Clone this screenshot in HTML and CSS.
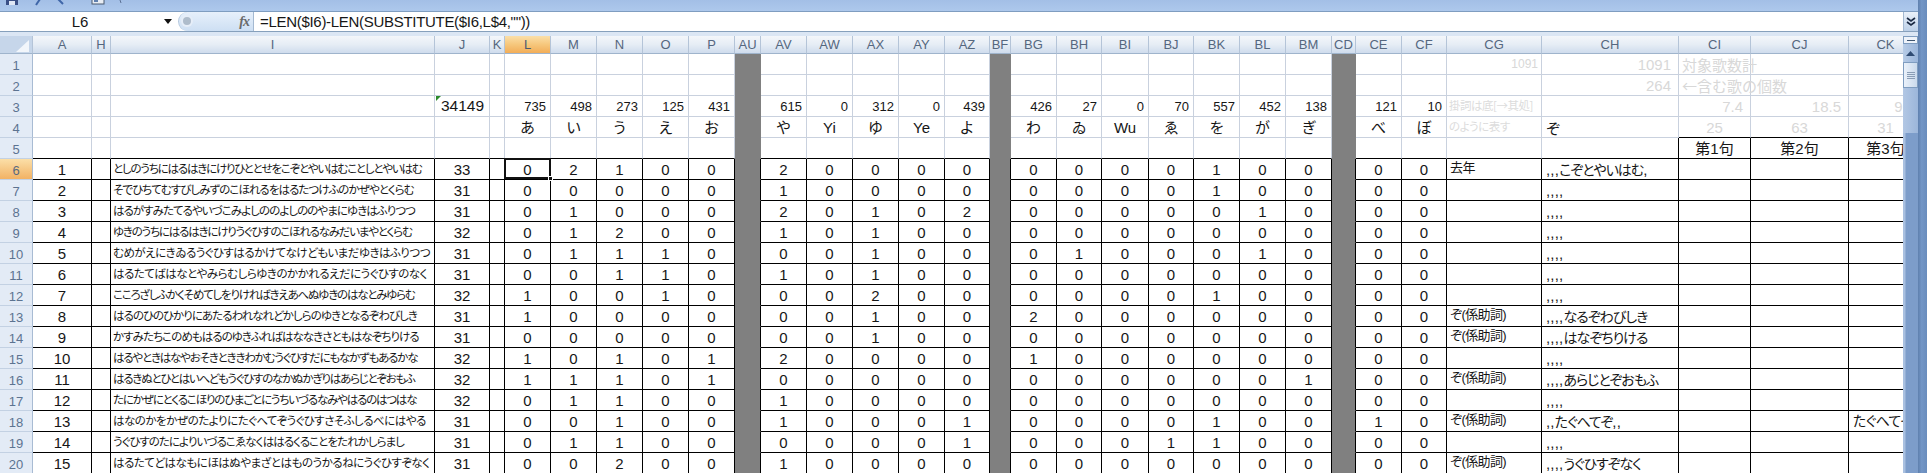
FILE: index.html
```html
<!DOCTYPE html>
<html lang="ja">
<head>
<meta charset="utf-8">
<title>Sheet</title>
<link rel="stylesheet" href="styles.css">
</head>
<body>
<div class="app">
<div class="main">
<header class="qat">
<svg class="qat-icons" width="130" height="11" viewBox="0 0 130 11">
<rect x="6" y="-4" width="12" height="9" fill="#3a4f86"/><rect x="9" y="1" width="6" height="4" fill="#dfe7f5"/>
<path d="M36 5 L40 -1" stroke="#3f66a8" stroke-width="2" fill="none"/>
<path d="M63 4 L58 -1" stroke="#3f66a8" stroke-width="2" fill="none"/>
<rect x="92" y="-3" width="12" height="7" fill="#e8edf4" stroke="#4a5a70"/><rect x="94" y="0" width="4" height="2" fill="#5f7fae"/>
<path d="M120 0 L121 3" stroke="#5a7094" stroke-width="1"/>
</svg>
</header>
<div class="formula">
<div class="namebox">L6</div>
<div class="name-arrow"><svg width="8" height="5" viewBox="0 0 8 5"><path d="M0 0H8L4 5Z" fill="#111"/></svg></div>
<div class="fx-pill"><span class="fx-dot"></span><span class="fx">fx</span></div>
<div class="input">=LEN($I6)-LEN(SUBSTITUTE($I6,L$4,""))</div>
<div class="expand"><svg width="10" height="10" viewBox="0 0 10 10"><path d="M1 1L5 4L9 1M1 5L5 8L9 5" fill="none" stroke="#1b2a44" stroke-width="1.6"/></svg></div>
</div>
<div class="gap"></div>
<div class="workarea">
<div class="sheet">
<table class="grid">
<colgroup>
<col class="w33"><col class="w59"><col class="w19"><col class="w324"><col class="w55"><col class="w15">
<col class="w46"><col class="w46"><col class="w46"><col class="w46"><col class="w46"><col class="w26">
<col class="w46"><col class="w46"><col class="w46"><col class="w46"><col class="w45"><col class="w21">
<col class="w46"><col class="w45"><col class="w47"><col class="w45"><col class="w46"><col class="w46"><col class="w46"><col class="w24">
<col class="w46"><col class="w45"><col class="w95"><col class="w137"><col class="w72"><col class="w98"><col class="w74">
</colgroup>
<thead>
<tr><th class="corner"><svg width="14" height="12" viewBox="0 0 14 12"><path d="M14 0V12H1Z" fill="#f2f6fb"/></svg></th><th>A</th><th>H</th><th>I</th><th>J</th><th>K</th><th class="on">L</th><th>M</th><th>N</th><th>O</th><th>P</th><th>AU</th><th>AV</th><th>AW</th><th>AX</th><th>AY</th><th>AZ</th><th>BF</th><th>BG</th><th>BH</th><th>BI</th><th>BJ</th><th>BK</th><th>BL</th><th>BM</th><th>CD</th><th>CE</th><th>CF</th><th>CG</th><th>CH</th><th>CI</th><th>CJ</th><th>CK</th></tr>
</thead>
<tbody>
<tr><th>1</th><td></td><td></td><td></td><td></td><td></td><td></td><td></td><td></td><td></td><td></td><td class="g"></td><td></td><td></td><td></td><td></td><td></td><td class="g"></td><td></td><td></td><td></td><td></td><td></td><td></td><td></td><td class="g"></td><td></td><td></td><td class="note-n">1091</td><td class="faint-r">1091</td><td class="faint-l">対象歌数計</td><td></td><td></td></tr>
<tr><th>2</th><td></td><td></td><td></td><td></td><td></td><td></td><td></td><td></td><td></td><td></td><td class="g"></td><td></td><td></td><td></td><td></td><td></td><td class="g"></td><td></td><td></td><td></td><td></td><td></td><td></td><td></td><td class="g"></td><td></td><td></td><td></td><td class="faint-r">264</td><td class="faint-l">←含む歌の個数</td><td></td><td></td></tr>
<tr class="totals"><th>3</th><td></td><td></td><td></td><td class="flag">34149</td><td></td><td>735</td><td>498</td><td>273</td><td>125</td><td>431</td><td class="g"></td><td>615</td><td>0</td><td>312</td><td>0</td><td>439</td><td class="g"></td><td>426</td><td>27</td><td>0</td><td>70</td><td>557</td><td>452</td><td>138</td><td class="g"></td><td>121</td><td>10</td><td class="note">掛詞は底[→其処]</td><td></td><td class="faint-r">7.4</td><td class="faint-r">18.5</td><td class="faint-r">9.2</td></tr>
<tr class="kana"><th>4</th><td></td><td></td><td></td><td></td><td></td><td>あ</td><td>い</td><td>う</td><td>え</td><td>お</td><td class="g"></td><td>や</td><td>Yi</td><td>ゆ</td><td>Ye</td><td>よ</td><td class="g"></td><td>わ</td><td>ゐ</td><td>Wu</td><td>ゑ</td><td>を</td><td>が</td><td>ぎ</td><td class="g"></td><td>べ</td><td>ぼ</td><td class="note">のように表す</td><td class="verse">ぞ</td><td class="faint-c line-b">25</td><td class="faint-c line-b">63</td><td class="faint-c line-b">31</td></tr>
<tr class="r5"><th>5</th><td></td><td></td><td></td><td></td><td></td><td></td><td></td><td></td><td></td><td></td><td class="g"></td><td></td><td></td><td></td><td></td><td></td><td class="g"></td><td></td><td></td><td></td><td></td><td></td><td></td><td></td><td class="g"></td><td></td><td></td><td></td><td class="line-r"></td><td class="ku">第1句</td><td class="ku">第2句</td><td class="ku">第3句</td></tr>
<tr class="b"><th class="on">6</th><td>1</td><td></td><td class="poem">としのうちにはるはきにけりひととせをこぞとやいはむことしとやいはむ</td><td>33</td><td></td><td class="cursor">0</td><td>2</td><td>1</td><td>0</td><td>0</td><td class="g"></td><td>2</td><td>0</td><td>0</td><td>0</td><td>0</td><td class="g"></td><td>0</td><td>0</td><td>0</td><td>0</td><td>1</td><td>0</td><td>0</td><td class="g"></td><td>0</td><td>0</td><td class="tag">去年</td><td class="verse"><span class="cm">,,,</span>こぞとやいはむ<span class="cm">,</span></td><td></td><td></td><td></td></tr>
<tr class="b"><th>7</th><td>2</td><td></td><td class="poem mid">そでひちてむすびしみずのこほれるをはるたつけふのかぜやとくらむ</td><td>31</td><td></td><td>0</td><td>0</td><td>0</td><td>0</td><td>0</td><td class="g"></td><td>1</td><td>0</td><td>0</td><td>0</td><td>0</td><td class="g"></td><td>0</td><td>0</td><td>0</td><td>0</td><td>1</td><td>0</td><td>0</td><td class="g"></td><td>0</td><td>0</td><td class="tag"></td><td class="verse"><span class="cm">,,,,</span></td><td></td><td></td><td></td></tr>
<tr class="b"><th>8</th><td>3</td><td></td><td class="poem mid">はるがすみたてるやいづこみよしののよしののやまにゆきはふりつつ</td><td>31</td><td></td><td>0</td><td>1</td><td>0</td><td>0</td><td>0</td><td class="g"></td><td>2</td><td>0</td><td>1</td><td>0</td><td>2</td><td class="g"></td><td>0</td><td>0</td><td>0</td><td>0</td><td>0</td><td>1</td><td>0</td><td class="g"></td><td>0</td><td>0</td><td class="tag"></td><td class="verse"><span class="cm">,,,,</span></td><td></td><td></td><td></td></tr>
<tr class="b"><th>9</th><td>4</td><td></td><td class="poem">ゆきのうちにはるはきにけりうぐひすのこほれるなみだいまやとくらむ</td><td>32</td><td></td><td>0</td><td>1</td><td>2</td><td>0</td><td>0</td><td class="g"></td><td>1</td><td>0</td><td>1</td><td>0</td><td>0</td><td class="g"></td><td>0</td><td>0</td><td>0</td><td>0</td><td>0</td><td>0</td><td>0</td><td class="g"></td><td>0</td><td>0</td><td class="tag"></td><td class="verse"><span class="cm">,,,,</span></td><td></td><td></td><td></td></tr>
<tr class="b"><th>10</th><td>5</td><td></td><td class="poem wide">むめがえにきゐるうぐひすはるかけてなけどもいまだゆきはふりつつ</td><td>31</td><td></td><td>0</td><td>1</td><td>1</td><td>1</td><td>0</td><td class="g"></td><td>0</td><td>0</td><td>1</td><td>0</td><td>0</td><td class="g"></td><td>0</td><td>1</td><td>0</td><td>0</td><td>0</td><td>1</td><td>0</td><td class="g"></td><td>0</td><td>0</td><td class="tag"></td><td class="verse"><span class="cm">,,,,</span></td><td></td><td></td><td></td></tr>
<tr class="b"><th>11</th><td>6</td><td></td><td class="poem wide">はるたてばはなとやみらむしらゆきのかかれるえだにうぐひすのなく</td><td>31</td><td></td><td>0</td><td>0</td><td>1</td><td>1</td><td>0</td><td class="g"></td><td>1</td><td>0</td><td>1</td><td>0</td><td>0</td><td class="g"></td><td>0</td><td>0</td><td>0</td><td>0</td><td>0</td><td>0</td><td>0</td><td class="g"></td><td>0</td><td>0</td><td class="tag"></td><td class="verse"><span class="cm">,,,,</span></td><td></td><td></td><td></td></tr>
<tr class="b"><th>12</th><td>7</td><td></td><td class="poem">こころざしふかくそめてしをりければきえあへぬゆきのはなとみゆらむ</td><td>32</td><td></td><td>1</td><td>0</td><td>0</td><td>1</td><td>0</td><td class="g"></td><td>0</td><td>0</td><td>2</td><td>0</td><td>0</td><td class="g"></td><td>0</td><td>0</td><td>0</td><td>0</td><td>1</td><td>0</td><td>0</td><td class="g"></td><td>0</td><td>0</td><td class="tag"></td><td class="verse"><span class="cm">,,,,</span></td><td></td><td></td><td></td></tr>
<tr class="b"><th>13</th><td>8</td><td></td><td class="poem mid">はるのひのひかりにあたるわれなれどかしらのゆきとなるぞわびしき</td><td>31</td><td></td><td>1</td><td>0</td><td>0</td><td>0</td><td>0</td><td class="g"></td><td>0</td><td>0</td><td>1</td><td>0</td><td>0</td><td class="g"></td><td>2</td><td>0</td><td>0</td><td>0</td><td>0</td><td>0</td><td>0</td><td class="g"></td><td>0</td><td>0</td><td class="tag">ぞ(係助詞)</td><td class="verse"><span class="cm">,,,,</span>なるぞわびしき</td><td></td><td></td><td></td></tr>
<tr class="b"><th>14</th><td>9</td><td></td><td class="poem mid">かすみたちこのめもはるのゆきふればはななきさともはなぞちりける</td><td>31</td><td></td><td>0</td><td>0</td><td>0</td><td>0</td><td>0</td><td class="g"></td><td>0</td><td>0</td><td>1</td><td>0</td><td>0</td><td class="g"></td><td>0</td><td>0</td><td>0</td><td>0</td><td>0</td><td>0</td><td>0</td><td class="g"></td><td>0</td><td>0</td><td class="tag">ぞ(係助詞)</td><td class="verse"><span class="cm">,,,,</span>はなぞちりける</td><td></td><td></td><td></td></tr>
<tr class="b"><th>15</th><td>10</td><td></td><td class="poem">はるやときはなやおそきとききわかむうぐひすだにもなかずもあるかな</td><td>32</td><td></td><td>1</td><td>0</td><td>1</td><td>0</td><td>1</td><td class="g"></td><td>2</td><td>0</td><td>0</td><td>0</td><td>0</td><td class="g"></td><td>1</td><td>0</td><td>0</td><td>0</td><td>0</td><td>0</td><td>0</td><td class="g"></td><td>0</td><td>0</td><td class="tag"></td><td class="verse"><span class="cm">,,,,</span></td><td></td><td></td><td></td></tr>
<tr class="b"><th>16</th><td>11</td><td></td><td class="poem">はるきぬとひとはいへどもうぐひすのなかぬかぎりはあらじとぞおもふ</td><td>32</td><td></td><td>1</td><td>1</td><td>1</td><td>0</td><td>1</td><td class="g"></td><td>0</td><td>0</td><td>0</td><td>0</td><td>0</td><td class="g"></td><td>0</td><td>0</td><td>0</td><td>0</td><td>0</td><td>0</td><td>1</td><td class="g"></td><td>0</td><td>0</td><td class="tag">ぞ(係助詞)</td><td class="verse"><span class="cm">,,,,</span>あらじとぞおもふ</td><td></td><td></td><td></td></tr>
<tr class="b"><th>17</th><td>12</td><td></td><td class="poem">たにかぜにとくるこほりのひまごとにうちいづるなみやはるのはつはな</td><td>32</td><td></td><td>0</td><td>1</td><td>1</td><td>0</td><td>0</td><td class="g"></td><td>1</td><td>0</td><td>0</td><td>0</td><td>0</td><td class="g"></td><td>0</td><td>0</td><td>0</td><td>0</td><td>0</td><td>0</td><td>0</td><td class="g"></td><td>0</td><td>0</td><td class="tag"></td><td class="verse"><span class="cm">,,,,</span></td><td></td><td></td><td></td></tr>
<tr class="b"><th>18</th><td>13</td><td></td><td class="poem wide">はなのかをかぜのたよりにたぐへてぞうぐひすさそふしるべにはやる</td><td>31</td><td></td><td>0</td><td>0</td><td>1</td><td>0</td><td>0</td><td class="g"></td><td>1</td><td>0</td><td>0</td><td>0</td><td>1</td><td class="g"></td><td>0</td><td>0</td><td>0</td><td>0</td><td>1</td><td>0</td><td>0</td><td class="g"></td><td>1</td><td>0</td><td class="tag">ぞ(係助詞)</td><td class="verse"><span class="cm">,,</span>たぐへてぞ<span class="cm">,,</span></td><td></td><td></td><td class="verse-plain">たぐへてぞ</td></tr>
<tr class="b"><th>19</th><td>14</td><td></td><td class="poem mid">うぐひすのたによりいづるこゑなくははるくることをたれかしらまし</td><td>31</td><td></td><td>0</td><td>1</td><td>1</td><td>0</td><td>0</td><td class="g"></td><td>0</td><td>0</td><td>0</td><td>0</td><td>1</td><td class="g"></td><td>0</td><td>0</td><td>0</td><td>1</td><td>1</td><td>0</td><td>0</td><td class="g"></td><td>0</td><td>0</td><td class="tag"></td><td class="verse"><span class="cm">,,,,</span></td><td></td><td></td><td></td></tr>
<tr class="b"><th>20</th><td>15</td><td></td><td class="poem wide">はるたてどはなもにほはぬやまざとはものうかるねにうぐひすぞなく</td><td>31</td><td></td><td>0</td><td>0</td><td>2</td><td>0</td><td>0</td><td class="g"></td><td>1</td><td>0</td><td>0</td><td>0</td><td>0</td><td class="g"></td><td>0</td><td>0</td><td>0</td><td>0</td><td>0</td><td>0</td><td>0</td><td class="g"></td><td>0</td><td>0</td><td class="tag">ぞ(係助詞)</td><td class="verse"><span class="cm">,,,,</span>うぐひすぞなく</td><td></td><td></td><td></td></tr>
</tbody>
</table>
</div>
<aside class="vscroll">
<div class="split"><span></span></div>
<div class="up"><svg width="9" height="5" viewBox="0 0 9 5"><path d="M0 5L4.5 0L9 5Z" fill="#2f4b73"/></svg></div>
<div class="thumb"><span></span><span></span><span></span><span></span></div>
<div class="track-up"></div>
<div class="track-down"></div>
</aside>
</div>
</div>
<div class="frame"></div>
</div>
</body>
</html>
```
FILE: styles.css
```css
html, body { margin: 0; padding: 0; background: #fff; }
.app { display: flex; width: 1927px; height: 473px; overflow: hidden; font-family: "Liberation Sans", "Noto Sans CJK JP", sans-serif; color: #161616; }
.main { width: 1918px; display: flex; flex-direction: column; flex: none; }
.frame { width: 9px; flex: none; background: linear-gradient(90deg, #5f80ae, #7396c6 40%, #6a8dbd); }

.qat { height: 11px; flex: none; box-sizing: content-box; background: linear-gradient(180deg, #a3bfe6, #adc8ec); border-bottom: 1px solid #7f9dc0; overflow: hidden; }
.qat-icons { display: block; }

.formula { height: 20px; flex: none; display: flex; align-items: stretch; background: #fff; border-bottom: 1px solid #86a0bc; box-sizing: border-box; }
.namebox { width: 158px; padding-left: 2px; text-align: center; font-size: 15px; line-height: 19px; box-sizing: border-box; }
.name-arrow { width: 20px; display: flex; align-items: center; justify-content: center; }
.fx-pill { width: 75px; position: relative; display: flex; align-items: center; justify-content: flex-end; background: linear-gradient(180deg, #e7f0fb, #cddff3); border-radius: 10px 0 0 10px; border-left: 1px solid #b5c9df; box-sizing: border-box; }
.fx-dot { position: absolute; left: 4px; top: 5px; width: 8px; height: 8px; border-radius: 50%; background: #aebccb; box-shadow: 0 0 0 2px #e6eef8; }
.fx { font-family: "Liberation Serif", serif; font-style: italic; font-weight: bold; font-size: 14px; color: #6a6a6a; padding-right: 4px; letter-spacing: -1px; }
.input { flex: 1; border-left: 1px solid #a4b9d1; padding-left: 6px; font-size: 15px; letter-spacing: -0.3px; line-height: 19px; white-space: nowrap; }
.expand { width: 15px; display: flex; align-items: center; justify-content: center; background: linear-gradient(180deg, #eaf1fa, #bcd0e8); border-left: 1px solid #a4b9d1; box-sizing: border-box; }

.gap { height: 4px; flex: none; background: #dbe6f4; }

.workarea { flex: 1; display: flex; min-height: 0; }
.sheet { width: 1903px; overflow: hidden; flex: none; }
.grid { border-collapse: separate; border-spacing: 0; table-layout: fixed; width: 1923px; }

.w15 { width: 15px; } .w19 { width: 19px; } .w21 { width: 21px; } .w24 { width: 24px; } .w26 { width: 26px; }
.w33 { width: 33px; } .w45 { width: 45px; } .w46 { width: 46px; } .w47 { width: 47px; } .w55 { width: 55px; }
.w59 { width: 59px; } .w72 { width: 72px; } .w74 { width: 74px; } .w95 { width: 95px; } .w98 { width: 98px; }
.w137 { width: 137px; } .w324 { width: 324px; }

.grid thead th { height: 18px; box-sizing: border-box; padding: 0; font-weight: normal; font-size: 13px; line-height: 1; color: #55677f; background: linear-gradient(180deg, #f3f6fa, #e6edf5 50%, #cfdced); border-right: 1px solid #b4c4d8; border-bottom: 1px solid #9fb4cc; }
.grid thead th.corner { background: #c6d6ea; text-align: right; padding-right: 3px; vertical-align: bottom; }
.corner svg { display: block; margin-left: auto; margin-bottom: 1px; }
.grid thead th.on { background: linear-gradient(180deg, #fbdfa8, #f6c77c 50%, #f2ad58); color: #4b5a70; }

.grid tbody th { height: 21px; box-sizing: border-box; padding: 3px 0 0; font-weight: normal; font-size: 13px; line-height: 1; color: #5c7391; background: #e3ebf6; border-right: 1px solid #a8bbd3; border-bottom: 1px solid #c3d1e3; }
.grid tbody th.on { background: linear-gradient(180deg, #fbdfa8, #f2b264); color: #5a6a80; }

.grid td { height: 21px; box-sizing: border-box; padding: 0; text-align: center; font-size: 15px; line-height: 1; white-space: nowrap; border-right: 1px solid #c9d1de; border-bottom: 1px solid #c9d1de; }
.grid td.g { background: #808080; border-right-color: #808080; border-bottom-color: #808080; }

.totals td { font-size: 13px; text-align: right; padding-right: 4px; }
.kana td { font-size: 15px; font-feature-settings: "palt"; }
.grid .totals td.flag { position: relative; text-align: left; padding: 0 0 0 6px; font-size: 15.5px; }
.flag::before { content: ""; position: absolute; left: 1px; top: 0; border-style: solid; border-width: 5px 5px 0 0; border-color: #2b8a2b transparent transparent transparent; }

.r5 td { border-bottom-color: #000; }
.grid .r5 td.line-r { border-right-color: #000; }
.grid .kana td.line-b { border-bottom-color: #000; }
.grid .r5 td.ku { border-right-color: #000; font-size: 15px; font-feature-settings: "palt"; }
.grid .r5 td.g { border-bottom-color: #808080; }

.b td { border-right-color: #000; border-bottom-color: #000; }
.grid .b td.g { border-right-color: #000; border-bottom-color: #808080; }
.grid td.poem { text-align: left; padding-left: 2px; font-family: "Noto Sans CJK JP", sans-serif; font-size: 11.5px; letter-spacing: -1.2px; font-feature-settings: "palt"; overflow: hidden; }
.grid td.poem.mid { letter-spacing: -0.95px; }
.grid td.poem.wide { letter-spacing: -0.5px; }
.grid td.tag { text-align: left; padding: 0 0 3px 3px; font-size: 13px; letter-spacing: -0.6px; font-feature-settings: "palt"; }
.grid td.verse { text-align: left; padding-left: 4px; font-family: "Noto Sans CJK JP", sans-serif; font-size: 14px; letter-spacing: -1px; font-feature-settings: "palt"; vertical-align: bottom; padding-bottom: 2px; }
.cm { font-family: "Liberation Sans", sans-serif; font-size: 15px; letter-spacing: 0.2px; }
.grid .kana td.verse { vertical-align: middle; padding-bottom: 0; font-size: 15px; }
.grid td.verse-plain { text-align: left; padding-left: 4px; font-size: 14px; letter-spacing: -0.6px; font-feature-settings: "palt"; overflow: hidden; }

.grid td.note-n { text-align: right; padding-right: 3px; font-size: 12px; color: #d8d8d8; }
.grid td.note { text-align: left; padding: 0 0 0 2px; font-family: "Noto Sans CJK JP", sans-serif; font-size: 11.5px; letter-spacing: -0.5px; color: #dcdcdc; font-feature-settings: "palt"; }
.grid td.faint-r { text-align: right; padding-right: 7px; color: #d8d8d8; font-size: 15px; }
.grid td.faint-l { text-align: left; padding-left: 3px; font-family: "Noto Sans CJK JP", sans-serif; color: #d8d8d8; font-size: 15px; }
.grid td.faint-c { color: #d8d8d8; font-size: 15px; }

.cursor { position: relative; }
.cursor::after { content: ""; position: absolute; inset: -1px -1px 0 -1px; border: 2px solid #111; outline: 1px solid #fff; outline-offset: -3px; box-sizing: border-box; pointer-events: none; }
.cursor::before { content: ""; position: absolute; right: -3px; bottom: -2px; width: 5px; height: 5px; background: #111; border: 1px solid #fff; box-sizing: border-box; z-index: 2; }

.vscroll { width: 15px; flex: none; display: flex; flex-direction: column; background: #83a3d0; }
.split { height: 8px; background: #eef3fa; border: 1px solid #7f9dc0; box-sizing: border-box; display: flex; align-items: center; justify-content: center; }
.split span { display: block; width: 8px; height: 1px; background: #3f5570; }
.up { height: 18px; flex: none; display: flex; align-items: center; justify-content: center; background: linear-gradient(90deg, #b6cbe6, #9ab5da); }
.thumb { height: 26px; flex: none; display: flex; flex-direction: column; align-items: center; justify-content: center; gap: 1px; background: linear-gradient(90deg, #eaf1fa, #cbdaec); border: 1px solid #7f9dc0; box-sizing: border-box; }
.thumb span { display: block; width: 8px; height: 1px; background: #8a9db5; }
.track-up { height: 45px; flex: none; background: linear-gradient(90deg, #b2c7e4, #9cb6da); }
.track-down { flex: 1; background: linear-gradient(90deg, #a9c0e0 0 2px, #7d9dca 3px, #7d9dca 100%); }
```
